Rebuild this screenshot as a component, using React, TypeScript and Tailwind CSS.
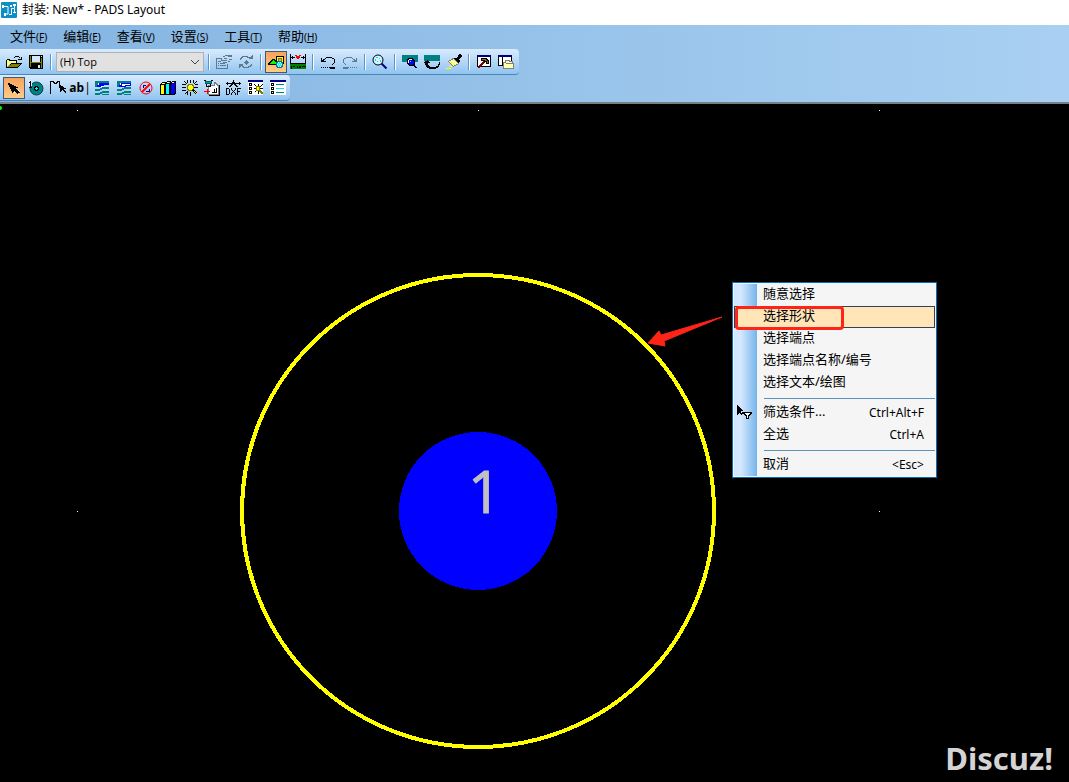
import { useState } from 'react';

type Tool = { label: string; icon: React.ReactNode; active?: boolean };

const Icon = ({ children }: { children: React.ReactNode }) => (
    <svg className="w-4 h-4" viewBox="0 0 16 16" fill="none" shapeRendering="crispEdges" aria-hidden="true">{children}</svg>
);

const Layers = ({ filled }: { filled?: boolean }) => (
    <Icon>
        <path fill="#008080" d="M1 1h14v2H4v4H1zM1 9h5v2H1zM6 8h2v2H6zM8 7h7v2H8zM1 13h5v2H1zM6 12h2v2H6zM8 11h7v2H8zM8 14h7v1H8z" />
        <path fill="#fff" d="M4 3h11v2h-5v2H4z" />
        {filled && <path fill="#0000ff" d="M5 3h10v2h-5v1H7v1H3V5h2z" />}
        {!filled && <path stroke="#0000ff" d="M5.5 3.5h9v2h-5v1h-6v-1h2z" />}
    </Icon>
);

const fileTools: Tool[] = [
    {
        label: '打开',
        icon: <Icon>
            <path fill="#000" d="M9 2h4v1H9zM8 3h1v1H8zM13 3h1v1h-1zM12 5h4v1h-4zM15 3h1v3h-1zM1 5h3v1H1zM4 6h7v3h-1V7H3V6H1v8H0V6h1zM5 9h11v1h-1v1h-1v1h-1v1h-1v1H1v-1h1v-1h1v-1h1v-1h1z" />
            <path fill="#ffff80" d="M1 6h2v1h7v2H4v1H3v1H2v1H1z" />
            <path fill="#808000" d="M5 10h9v1h-1v1h-1v1H2v-1h1v-1h2z" />
        </Icon>,
    },
    {
        label: '保存',
        icon: <Icon>
            <path fill="#000" d="M1 1h14v14H2v-1H1z" />
            <path fill="#808000" d="M2 2h1v11H2zM13 4h1v10h-1zM3 8h10v1H3z" />
            <path fill="#d4e6f8" d="M4 2h8v6H4zM13 2h1v1h-1zM10 11h2v3h-2z" />
        </Icon>,
    },
];

const editTools: Tool[] = [
    {
        label: '属性',
        icon: <Icon>
            <path stroke="#61788d" d="M.5 4.5h5M.5 4v11M.5 14.5h11M11.5 10v5M2 7.5h3M2 9.5h1M4 9.5h5M2 11.5h1M4 11.5h6M6.5 2.5h2l1-1h6M5.5 3.5v3h5M7 8.5h4M13 5.5h3M12 7.5h2" />
            <path fill="#61788d" d="M8 4h3v1H8zM12 1h4v2h-4z" />
        </Icon>,
    },
    {
        label: '刷新',
        icon: <Icon>
            <path stroke="#61788d" d="M2.5 6V4.5h1v-1h1v-1h5v1h2v1h1M3.5 11.5h1v1h1v1h5v-1h2v-1h1V10" />
            <path fill="#61788d" d="M11 5h4V1h-1v1h-1v1h-1v1h-1zM1 10h4v1H4v1H3v1H2v1H1zM8 6h1v1h1v1h1v1h-1v1H9v1H8v-1H7V9H6V8h1V7h1z" />
        </Icon>,
    },
];

const drawTools: Tool[] = [
    {
        label: '绘图工具栏',
        active: true,
        icon: <Icon>
            <path fill="#ffff00" stroke="#000" d="M8.5 2.5h7v7h-7z" />
            <path fill="#f0a050" stroke="#808000" d="M10.5 4.5h3v3h-3z" />
            <path fill="#00ff00" stroke="#000" d="M.5 10.5v-1h1v-1h1v-1h1v-1h1v-1h2v1h1v1h1v1h1v1h1v1z" />
            <path fill="#00ffff" stroke="#008080" d="M9.5 7.5h4v1h1v4h-1v1h-4v-1h-1v-4h1z" />
            <path fill="#fff" d="M10 8h1v1h-1zM12 8h1v1h-1zM11 10h1v1h-1zM9 10h1v1H9zM13 10h1v1h-1zM10 12h1v1h-1zM12 12h1v1h-1z" />
        </Icon>,
    },
    {
        label: 'ECO 工具栏',
        icon: <Icon>
            <path stroke="#000" d="M.5 0v10M15.5 0v10M0 3.5h5M11 3.5h5M2.5 2v3M13.5 2v3" />
            <path fill="#ff0000" d="M5 1h2v1h2V1h2v1h-1v2H9v1H7V4H6V2H5z" />
            <path fill="#008000" d="M0 10h16v5H0z" />
            <path fill="#000" d="M0 9h16v1H0zM1 12h1v3H1zM3 12h2v1H3zM7 12h1v2H7zM9 12h2v2H9zM12 12h4v1h-4z" />
        </Icon>,
    },
];

const historyTools: Tool[] = [
    {
        label: '撤消',
        icon: <Icon>
            <path stroke="#000" d="M5 4.5h1M6 3.5h6M12 4.5h2M14.5 5v4M13 9.5h1M1 13.5h1M3 13.5h1M5 13.5h1M7 13.5h1M9 13.5h6M10 14.5h5M12 10.5h1" />
            <path fill="#000" d="M1 4h1v2h1V5h2v1H4v1h2v1H1z" />
        </Icon>,
    },
    {
        label: '重做',
        icon: <Icon>
            <path stroke="#61788d" d="M4 3.5h6M2 4.5h2M1.5 5v4M2 9.5h1M3 10.5h1M1 13.5h6M1 14.5h5M8 13.5h1M10 13.5h1M12 13.5h1M14 13.5h1M10 4.5h1" />
            <path fill="#61788d" d="M15 4h-1v2h-1V5h-2v1h1v1h-2v1h5z" />
        </Icon>,
    },
];

const zoomTools: Tool[] = [
    {
        label: '缩放',
        icon: <Icon>
            <path stroke="#000080" strokeWidth="2" shapeRendering="auto" d="M9.5 9.5l5 5" />
            <circle cx="6" cy="6" r="5" fill="#d9f2ff" stroke="#000" shapeRendering="auto" />
            <path fill="#00e5ff" d="M4 3h2v1H4zM3 5h1v2H3zM7 4h1v1H7zM5 7h1v1H5zM8 6h1v2H8z" />
        </Icon>,
    },
];

const viewTools: Tool[] = [
    {
        label: '查看整板',
        icon: <Icon>
            <path fill="#008080" d="M0 1h16v7H0z" />
            <path fill="#fff" stroke="#000" d="M6.5 4.5h4v1h1v1h1v4h-1v1h-4v-1h-1v-1h-1v-4h1z" />
            <path fill="#0000ff" d="M7 6h4v1h1v3h-1v1H8v-1H7z" />
            <path fill="#00ffff" d="M8 7h1v1H8z" />
            <path fill="#000" d="M12 11h1v1h1v1h1v1h-2v-1h-1z" />
        </Icon>,
    },
    {
        label: '重画',
        icon: <Icon>
            <path fill="#008080" d="M0 1h16v6H0z" />
            <path fill="#000" d="M3 6h1v1h1v1h1v1H4v2h1v1h1v1h6v-1h2v-2h1V8h1v3h-1v2h-1v1h-2v1H5v-1H3v-1H2v-2H1V9H0V8h1V7h2z" />
        </Icon>,
    },
    {
        label: '格式刷',
        icon: <Icon>
            <path fill="#000" d="M13 0h2v1h1v2h-1v1h-1v1h-1v1h1v2h-1v1h-1V8h-1V7h-1V6H9V5H8V4h3V3h1V1h1z" />
            <path fill="#ffff80" stroke="#808080" d="M7.5 4.5l5 5-5 3-5-5z" />
            <path stroke="#ffff00" d="M0 14.5h5M3 12.5h3M5.5 8v2M8.5 9v2" />
            <path stroke="#fff" d="M6 7.5h2M8 9.5h2" />
        </Icon>,
    },
];

const windowTools: Tool[] = [
    {
        label: '封装编辑器',
        icon: <Icon>
            <path fill="#fff" stroke="#000" d="M1.5 1.5h13v11h-13z" />
            <path fill="#000080" d="M1 1h14v2H1z" />
            <path stroke="#800000" strokeWidth="2" d="M8 8l-6 6" />
            <path fill="#808000" stroke="#000" d="M5.5 4.5h5v1h1v1h1v3h-2v-2h-2v-1h-3z" />
        </Icon>,
    },
    {
        label: '项目浏览器',
        icon: <Icon>
            <path fill="#fff" stroke="#000" d="M.5 1.5h13v10H.5z" />
            <path fill="#000080" d="M0 1h14v2H0z" />
            <path stroke="#000" d="M4.5 3v9" />
            <path fill="#ffffb0" stroke="#808080" d="M5.5 14.5v-6h2v-2h4v1h3v2h1v5z" />
            <path stroke="#808080" d="M8 9.5h7" />
        </Icon>,
    },
];

const draftingTools: Tool[] = [
    {
        label: '选择',
        active: true,
        icon: <Icon>
            <path fill="#000" d="M2 3h2v1h2v1h2v1h2v1h2v1h-2v1h1v1h1v1h1v1h1v1h-2v1h-1v-1h-1v-1H9v-1H8v1H7v1H6v-2H5V9H4V7H3V5H2z" />
            <path fill="#fff" d="M12 10h1v1h1v1h-1v-1h-1zM12 14h1v1h-1zM8 12h1v1H8z" />
        </Icon>,
    },
    {
        label: '端点',
        icon: <Icon>
            <circle cx="8.5" cy="8.5" r="6.5" fill="#008080" stroke="#00474a" shapeRendering="auto" />
            <path fill="#d9ebfe" d="M0 0h4v6H0z" />
            <path stroke="#000" d="M2.5 1v6M1 2.5h1M1 7.5h3" />
            <path fill="#00ffff" stroke="#000" d="M7.5 6.5h2v1h1v2h-1v1h-2v-1h-1v-2h1z" />
        </Icon>,
    },
    {
        label: '2D 线',
        icon: <Icon>
            <path stroke="#000" d="M.5 14V1.5h3v1h1v1h2v-1h1v-1h2v3" />
            <path fill="#000" d="M9 4h1v1h1v1h2v1h1v1h2v1h-2v1h1v1h1v2h-1v-1h-1v-1h-1v-1h-1v1h-1v1h-1V8H9z" />
        </Icon>,
    },
    {
        label: '文本',
        icon: <span className="font-['Open_Sans',sans-serif] text-xs font-bold">ab<span className="font-normal">|</span></span>,
    },
    { label: '铜箔', icon: <Layers filled /> },
    { label: '铜箔挖空', icon: <Layers /> },
    {
        label: '禁止区',
        icon: <Icon>
            <path stroke="#0000a0" d="M5 5.5h3M5.5 5v3M8 11.5h4M11.5 9v3" />
            <circle cx="8" cy="8" r="6" stroke="#ff0000" shapeRendering="auto" />
            <path stroke="#ff0000" strokeWidth="2" shapeRendering="auto" d="M12 4l-8 8" />
        </Icon>,
    },
    {
        label: '从库中获取',
        icon: <Icon>
            <path fill="#ffff00" stroke="#000" d="M.5 4.5h1v-1h1v-1h3v11h-1v1h-4z" />
            <path fill="#00ffff" stroke="#000" d="M5.5 3.5h1v-1h1v-1h3v12h-1v1h-4z" />
            <path fill="#0000ff" stroke="#000" d="M10.5 3.5h1v-1h1v-1h3v12h-1v1h-4z" />
            <path stroke="#000" d="M1 4.5h3M4.5 4v10M6 3.5h3M9.5 3v11M11 3.5h2" />
            <path stroke="#fff" d="M2 3.5h2M7 2.5h2M12 2.5h2" />
        </Icon>,
    },
    {
        label: '向导',
        icon: <Icon>
            <path stroke="#000" d="M8.5 0v3M8.5 12v4M0 7.5h4M12 7.5h4M2.5 1.5l3 3M14.5 1.5l-3 3M2.5 14.5l3-3M5.5 0v3M11.5 0v3M0 4.5h4M0 10.5h4M5.5 12v3M13 4.5h3" />
            <path fill="#ffff00" stroke="#808000" d="M6.5 4.5h4v1h1v4h-1v1h-4v-1h-1v-4h1z" />
            <path stroke="#fff" d="M7 5.5h2" />
            <path stroke="#000" strokeWidth="2" d="M11 10l4 4" />
            <path stroke="#ffff00" d="M12 11l3 3" />
        </Icon>,
    },
    {
        label: '放置标号',
        icon: <Icon>
            <path fill="#fff" stroke="#808080" d="M4.5 14.5v-9h6v-3h1v1h1v1h1v1h1v9z" />
            <path stroke="#000" d="M15.5 5v10M5 15.5h11M10.5 9v4M12.5 8v5M8 12.5h5" />
            <path fill="#00a0a0" stroke="#006060" d="M1.5 1.5h6v2h-6z" />
            <path stroke="#000" d="M0 .5h2M7 .5h2M2.5 4v2M6.5 4v3M2 6.5h4" />
            <path stroke="#ff0000" d="M0 11.5h6M3.5 9v5" />
        </Icon>,
    },
    {
        label: '导入 DXF',
        icon: <Icon>
            <path stroke="#000" d="M7.5 0v2M0 3.5h15M1.5 2v3M13.5 2v3M4.5 6.5v-1h1v-1h1v-2h2v2h1v1h1v1M3 6.5h2M10 6.5h2" />
            <path stroke="#000" d="M.5 8v7M0 8.5h3M0 14.5h3M3.5 9v5M5.5 8v2M9.5 8v2M6.5 10v1M8.5 10v1M7.5 11v1M6.5 12v1M8.5 12v1M5.5 13v2M9.5 13v2M11.5 8v7M11 8.5h4M11 11.5h3" />
        </Icon>,
    },
    {
        label: '选项向导',
        icon: <Icon>
            <path fill="#fff" d="M0 0h15v15H0z" />
            <path fill="#000080" d="M0 0h15v2H0z" />
            <path stroke="#000" d="M1.5 3.5h2v2h-2zM1.5 7.5h2v2h-2zM1.5 11.5h2v2h-2z" />
            <path stroke="#000" d="M10.5 4v10M6 8.5h9M6.5 4.5l8 8M14.5 4.5l-8 8" />
            <path fill="#ffff00" stroke="#808000" d="M8.5 6.5h3v4h-3z" />
            <path stroke="#808000" strokeWidth="2" d="M12 11l3 3" />
        </Icon>,
    },
    {
        label: '选项',
        icon: <Icon>
            <path fill="#fff" d="M0 0h16v15H0z" />
            <path fill="#000080" d="M0 0h16v2H0z" />
            <path stroke="#000" d="M1.5 3.5h2v2h-2zM1.5 7.5h2v2h-2zM1.5 11.5h2v2h-2z" />
            <path stroke="#008080" d="M6 4.5h8M6 12.5h8" />
            <path stroke="#00e5e5" d="M6 8.5h8" />
        </Icon>,
    },
];

const menus = [
    { name: '文件', hotkey: 'F' },
    { name: '编辑', hotkey: 'E' },
    { name: '查看', hotkey: 'V' },
    { name: '设置', hotkey: 'S' },
    { name: '工具', hotkey: 'T' },
    { name: '帮助', hotkey: 'H' },
];

const contextGroups = [
    [
        { name: '随意选择' },
        { name: '选择形状' },
        { name: '选择端点' },
        { name: '选择端点名称/编号' },
        { name: '选择文本/绘图' },
    ],
    [
        { name: '筛选条件...', shortcut: 'Ctrl+Alt+F', filter: true },
        { name: '全选', shortcut: 'Ctrl+A' },
    ],
    [{ name: '取消', shortcut: '<Esc>' }],
] as { name: string; shortcut?: string; filter?: boolean }[][];

const gridDots = [[77, 6], [478, 6], [879, 6], [77, 407], [879, 407]];

function Separator() {
    return (
        <div className="w-2 flex justify-center">
            <div className="w-[2px] h-4 bg-[#5a96c8] border-r border-white" />
        </div>
    );
}

function ToolGroup({ tools }: { tools: Tool[] }) {
    return (
        <>
            {tools.map(tool => (
                <button
                    key={tool.label}
                    type="button"
                    aria-label={tool.label}
                    className={`w-[22px] h-[22px] flex items-center justify-center shrink-0 ${tool.active ? 'border border-[#3c5a78] bg-linear-to-b from-[#f7a35c] to-[#ffcb85]' : ''}`}
                >
                    {tool.icon}
                </button>
            ))}
        </>
    );
}

function ContextMenu() {
    const [selected, setSelected] = useState('选择形状');

    return (
        <div role="menu" className="absolute left-[732px] top-[178px] w-[205px] p-px border border-[#0c6cb8] bg-[#f5f5f5]">
            <div className="absolute left-px top-px bottom-px w-[23px] bg-linear-to-r from-[#d3e8ff] from-30% to-[#74b4ea]" />
            {contextGroups.map((group, i) => (
                <div key={i} className="relative">
                    {i > 0 && (
                        <div className="h-2 pl-[30px] flex items-center">
                            <div className="h-px w-full bg-[#5b93bd]" />
                        </div>
                    )}
                    {group.map(item => (
                        <button
                            key={item.name}
                            type="button"
                            role="menuitem"
                            onClick={() => setSelected(item.name)}
                            className={`w-full h-[22px] flex items-center border pr-[10px] text-left ${item.name === selected ? 'border-[#2f4358] bg-[#ffe5b8]' : 'border-transparent'}`}
                        >
                            <span className="w-7 shrink-0">
                                {item.filter && (
                                    <svg className="w-5 h-5" viewBox="0 0 20 20" fill="none" shapeRendering="crispEdges" aria-hidden="true">
                                        <path fill="#000" d="M2 2h1v1h1v1h1v1h1v1h1v1h1v1H6v2h1v2H6v-1H5v-1H4v1H3v1H2z" />
                                        <path fill="#fff" stroke="#000" d="M7.5 9.5h9v1h-1v1h-1v1h-1v3h-2v-3h-1v-1h-1v-1h-2z" />
                                    </svg>
                                )}
                            </span>
                            <span className="flex-1 pb-1 text-[13px] leading-5 whitespace-nowrap">{item.name}</span>
                            {item.shortcut && <span className="text-xs">{item.shortcut}</span>}
                        </button>
                    ))}
                </div>
            ))}
            <div className="absolute left-[2px] top-[23px] w-[109px] h-6 border-3 border-[#ff2418] rounded-sm pointer-events-none" />
        </div>
    );
}

export default function App() {
    return (
        <div className="min-h-screen flex flex-col bg-black text-black font-['Noto_Sans','Noto_Sans_CJK_SC',sans-serif]">
            <header className="bg-white h-[25px] px-px flex items-center gap-[5px] pb-[5px]">
                <svg className="w-4 h-4" viewBox="0 0 16 16" fill="none" aria-hidden="true">
                    <rect width="16" height="16" rx="1" fill="#0a8fc8" />
                    <path stroke="#fff" d="M2 4.500h5v7.500H4M8 12.500h2.500V6.500h3V4M13.500 7v3" />
                    <path fill="#fff" d="M1 3h2v3H1zM3 11h2v3H3zM9 3h2v2H9zM12 2h3v2h-3zM12 10h3v1h-3z" />
                </svg>
                <h1 className="text-xs leading-5">封装: New* - PADS Layout</h1>
            </header>

            <div className="bg-linear-to-r from-[#84b4e1] to-[#a9d0f2] pb-px border-b-2 border-[#777f87]">
                <nav className="h-6 px-[10px] pb-[2px] flex items-center gap-4">
                    {menus.map(menu => (
                        <button key={menu.name} type="button" className="text-[13px] leading-5 whitespace-nowrap">
                            {menu.name}<span className="text-[10px]">(<u>{menu.hotkey}</u>)</span>
                        </button>
                    ))}
                </nav>

                <div className="flex">
                    <div className="h-[26px] pl-[3px] pr-[2px] flex items-center rounded-r border-b border-[#4c86b5] bg-linear-to-b from-[#d9ebfe] to-[#8fc4f0]">
                        <ToolGroup tools={fileTools} />
                        <Separator />
                        <div className="relative mx-px">
                            <select aria-label="层" className="block appearance-none w-[148px] h-5 px-[3px] border border-[#adb2b8] bg-[#e1e1e1] font-['Open_Sans',sans-serif] text-[11px] leading-4">
                                <option>(H) Top</option>
                            </select>
                            <svg className="absolute right-1 top-[6px] w-[10px] h-2 pointer-events-none" viewBox="0 0 10 8" fill="none" stroke="#444" aria-hidden="true">
                                <path d="M1 2l4 4 4-4" />
                            </svg>
                        </div>
                        <Separator />
                        <ToolGroup tools={editTools} />
                        <Separator />
                        <ToolGroup tools={drawTools} />
                        <Separator />
                        <ToolGroup tools={historyTools} />
                        <Separator />
                        <ToolGroup tools={zoomTools} />
                        <Separator />
                        <ToolGroup tools={viewTools} />
                        <Separator />
                        <ToolGroup tools={windowTools} />
                    </div>
                </div>

                <div className="flex">
                    <div className="h-[26px] pl-[3px] pr-px flex items-center rounded-r border-b border-[#4c86b5] bg-linear-to-b from-[#d9ebfe] to-[#8fc4f0]">
                        <ToolGroup tools={draftingTools} />
                    </div>
                </div>
            </div>

            <main className="relative flex-1 flex overflow-hidden">
                <svg className="flex-1 min-h-[678px]" fill="none" role="img" aria-label="封装">
                    <circle cx="0" cy="4" r="2" fill="#00ff00" />
                    {gridDots.map(([x, y]) => (
                        <rect key={`${x}-${y}`} x={x} y={y} width="1" height="1" fill="#fff" />
                    ))}
                    <circle cx="478" cy="407" r="236" stroke="#ffff00" strokeWidth="4" shapeRendering="crispEdges" />
                    <circle cx="478" cy="407" r="79" fill="#0000ff" shapeRendering="crispEdges" />
                    <text x="468" y="409" fill="#c0c0c0" stroke="#c0c0c0" strokeLinejoin="round" className="font-['Open_Sans',sans-serif] text-[58px]">1</text>
                    <path fill="#ff2418" stroke="#ff2418" strokeLinejoin="round" d="M722 213l-61 18-2-4-11 12 17 3-1-5z" />
                </svg>
                <ContextMenu />
                <p className="absolute right-4 bottom-1 text-[31px] leading-10 font-bold text-[#d4d4d4]">Discuz!</p>
            </main>
        </div>
    );
}
